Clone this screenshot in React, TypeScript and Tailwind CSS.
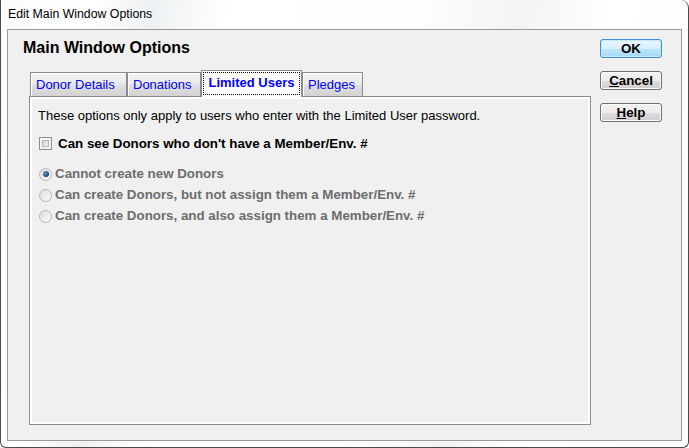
import React from 'react';

const tabs = [
  { label: 'Donor Details', cls: 'w-[97px]' },
  { label: 'Donations', cls: 'w-[74px]' },
  { label: 'Limited Users', cls: 'w-[101px]', selected: true },
  { label: 'Pledges', cls: 'w-[61px]' },
];

const radios = [
  { label: 'Cannot create new Donors', checked: true },
  { label: 'Can create Donors, but not assign them a Member/Env. #' },
  { label: 'Can create Donors, and also assign them a Member/Env. #' },
];

function Tab({ label, cls, selected }: { label: string; cls: string; selected?: boolean }) {
  if (selected) {
    return (
      <div className={`${cls} h-[27px] border border-b-0 border-[#898c95] bg-white px-[1px] pt-[1px]`}>
        <div className="h-[23px] border border-dotted border-black pt-[2px] text-center text-[13px] leading-[15px] font-bold text-[#0000ff]">
          {label}
        </div>
      </div>
    );
  }
  return (
    <div
      className={`${cls} h-[24px] mb-[1px] border border-b-0 border-[#898c95] bg-[linear-gradient(to_bottom,#f3f3f3,#ebebeb_45%,#dedede_55%,#d3d3d3)] shadow-[inset_1px_1px_0_#fff] pl-[5px] pt-[4px] text-[13px] leading-[15px] text-[#0000ff]`}
    >
      {label}
    </div>
  );
}

function WinButton({ children, primary }: { children: React.ReactNode; primary?: boolean }) {
  return (
    <button
      className={
        primary
          ? 'w-[62px] h-[19px] rounded-[3px] border border-[#3c8fd8] bg-[linear-gradient(to_bottom,#eaf6fd,#d9f0fc_50%,#bee6fd_50%,#a7d9f5)] shadow-[inset_0_0_0_1px_#c6e9fb] text-[13.33px] leading-[15px] font-bold text-black'
          : 'w-[62px] h-[19px] rounded-[3px] border border-[#707070] bg-[linear-gradient(to_bottom,#f2f2f2,#ebebeb_50%,#dddddd_50%,#cfcfcf)] shadow-[inset_0_0_0_1px_#fcfcfc] text-[13.33px] leading-[15px] font-bold text-black'
      }
    >
      {children}
    </button>
  );
}

export default function App() {
  return (
    <div className="w-[689px] h-[448px] bg-white font-['Liberation_Sans',Arial,sans-serif]">
      <div className="w-full h-full flex flex-col border-x border-b border-[#4b4b4b] rounded-b-[6px] rounded-tr-[8px] bg-[linear-gradient(100deg,#fafbfc_0%,#ffffff_12%,#eef1f3_20%,#ffffff_30%,#fdfdfd_55%,#f2f4f5_68%,#ffffff_80%,#fafbfb_100%)] px-[6px] pb-[6px]">
        <div className="h-[29px] flex items-center pl-[1px] text-[12.3px] text-black">
          Edit Main Window Options
        </div>
        <div className="flex-1 flex border border-[#999999] bg-[#f0f0f0]">
          <div className="pl-[21px] pt-[9px] flex flex-col">
            <h1 className="-ml-[6px] text-[16px] leading-[18px] font-bold text-black">Main Window Options</h1>
            <div className="mt-[12.5px] ml-[1px] h-[27px] -mb-[1px] flex items-end relative z-10">
              {tabs.map((t) => (
                <Tab key={t.label} {...t} />
              ))}
            </div>
            <div className="w-[562px] h-[329px] border border-[#898c95] shadow-[inset_0_0_0_2px_#ffffff] pl-[8px] pt-[11px] text-[13.33px] leading-[16px]">
              <div className="text-[13px] text-black">
                These options only apply to users who enter with the Limited User password.
              </div>
              <div className="mt-[12px] h-[16px] flex items-center">
                <div className="ml-[1px] w-[13px] h-[13px] border border-[#8e8f8f] bg-[#f4f4f4] p-[2px]">
                  <div className="w-full h-full border border-[#b6b6b6] bg-[linear-gradient(135deg,#d4d4d4,#f3f3f3)]" />
                </div>
                <span className="ml-[6px] font-bold text-black">Can see Donors who don't have a Member/Env. #</span>
              </div>
              <div className="mt-[12px] flex flex-col">
                {radios.map((r) => (
                  <div key={r.label} className="h-[21px] flex items-center">
                    <div className="ml-[1px] w-[13px] h-[13px] rounded-full border border-[#b5b5b5] bg-[linear-gradient(135deg,#dedede,#fbfbfb)] flex items-center justify-center">
                      {r.checked && (
                        <div className="w-[6px] h-[6px] rounded-full bg-[radial-gradient(circle_at_35%_35%,#6d9bd0,#1a3f78_70%)]" />
                      )}
                    </div>
                    <span className="ml-[3px] font-bold text-[#6d6d6d]">{r.label}</span>
                  </div>
                ))}
              </div>
            </div>
          </div>
          <div className="ml-[9px] pt-[9px] flex flex-col gap-[13px]">
            <WinButton primary>OK</WinButton>
            <WinButton>
              <span className="underline">C</span>ancel
            </WinButton>
            <WinButton>
              <span className="underline">H</span>elp
            </WinButton>
          </div>
        </div>
      </div>
    </div>
  );
}
